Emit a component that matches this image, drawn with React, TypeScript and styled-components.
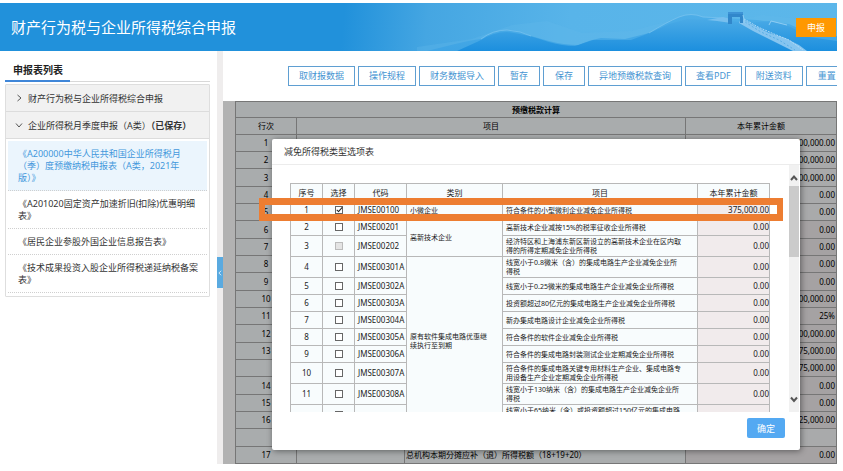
import React from "react";
import styled, { createGlobalStyle, css } from "styled-components";

const GlobalStyle = createGlobalStyle`
  *, *::before, *::after { box-sizing: border-box; }
  body {
    margin: 0;
    background: #fff;
    color: #333;
    font-family: "Noto Sans", "Noto Sans CJK SC", sans-serif;
    font-size: 9px;
  }
  button { font-family: inherit; cursor: pointer; }
`;

const Page = styled.div`
  display: flex;
  flex-direction: column;
  min-height: 100vh;
  padding: 3px 6px 7px 0;
`;

const Header = styled.header`
  position: relative;
  display: flex;
  align-items: center;
  justify-content: space-between;
  height: 48px;
  padding: 0 1px 0 11px;
  background: linear-gradient(95deg, #2191db 0, #2191db 41%, #45a6e2 51%, #58b4e9 68%, #5cb7ea 100%);
`;

const Scenery = styled.svg`
  position: absolute;
  right: 0;
  bottom: 0;
  width: 420px;
  height: 48px;
`;

const PageTitle = styled.h1`
  position: relative;
  margin: 0;
  color: #fff;
  font-size: 15px;
  font-weight: 400;
  line-height: 20px;
`;

const SubmitButton = styled.button`
  position: relative;
  width: 40px;
  height: 19px;
  padding: 0;
  border: 0;
  background: #ff9800;
  color: #fff;
  font-size: 9px;
`;

const Body = styled.div`
  display: flex;
  flex: 1;
`;

const Sidebar = styled.aside`
  width: 217px;
  flex: none;
  padding: 9px 7px 0 5px;
`;

const SidebarTitle = styled.h2`
  margin: 0 0 2px;
  border-bottom: 1px solid #d8d8d8;
  font-size: 10px;
  line-height: 21px;
  color: #222;

  span {
    display: inline-block;
    width: 65px;
    height: 22px;
    margin-bottom: -1px;
    padding-left: 8px;
    border-bottom: 2px solid #3f86d8;
    vertical-align: top;
  }
`;

const Tree = styled.nav`
  border: 1px solid #dedede;
  border-radius: 1px;
`;

const Group = styled.button`
  display: flex;
  align-items: center;
  gap: 5px;
  width: 100%;
  height: 27px;
  padding: 0 0 0 9px;
  border: 0;
  border-bottom: 1px solid #dcdcdc;
  background: #f1f1f1;
  color: #333;
  font-size: 9px;
  white-space: nowrap;

  svg { width: 8px; height: 8px; flex: none; }
`;

const FormList = styled.ul`
  margin: 0;
  padding: 2px 2px 3px;
  list-style: none;
`;

const FormLink = styled.a<{ $active?: boolean }>`
  display: block;
  padding: 7px 0 6px 10px;
  border-bottom: 1px dotted #cfcfcf;
  background: ${(p) => (p.$active ? "#ebf5fd" : "transparent")};
  color: ${(p) => (p.$active ? "#4398dc" : "#333")};
  line-height: 12px;
  text-decoration: none;
  white-space: pre;
`;

const Splitter = styled.div`
  width: 6px;
  flex: none;
  padding-top: 206px;
  background: #efeded;
`;

const CollapseButton = styled.button`
  display: flex;
  align-items: center;
  justify-content: center;
  width: 6px;
  height: 31px;
  padding: 0;
  border: 0;
  background: #5aaae0;

  svg { width: 6px; height: 8px; flex: none; }
`;

const Main = styled.main`
  display: flex;
  flex: 1;
  flex-direction: column;
  min-width: 0;
`;

const Toolbar = styled.div`
  display: flex;
  gap: 3px;
  height: 50px;
  padding: 15px 0 0 65px;
  overflow: hidden;
`;

const ToolButton = styled.button`
  flex: none;
  min-width: 42px;
  height: 20px;
  padding: 0 10px;
  border: 1px solid #5f9fd2;
  background: #fff;
  color: #4594d2;
  font-size: 9px;
  line-height: 16px;
  white-space: nowrap;
`;

const Workspace = styled.section`
  position: relative;
  flex: 1;
  padding-left: 12px;
`;

const Ledger = styled.table`
  width: 100%;
  table-layout: fixed;
  border-spacing: 0;
  border-top: 1px solid #aaa;
  border-left: 1px solid #aaa;
  color: #000;
  font-size: 8px;
  line-height: 12px;

  tr { height: 17px; }
  thead tr:first-child { height: 16px; }
  tbody tr:nth-child(3n) { height: 18px; }
  th, td {
    padding: 0 1px;
    border-right: 1px solid #aaa;
    border-bottom: 1px solid #aaa;
    background: #f3f6f8;
    font-weight: 400;
    white-space: nowrap;
  }
  thead tr:first-child th { font-weight: 700; }
`;

const LedgerNo = styled.td`
  text-align: center;
`;

const LedgerAmount = styled.td<{ $open?: boolean }>`
  && { background: ${(p) => (p.$open ? "#f3f4f5" : "#ede9ea")}; }
  text-align: right;
`;

const Backdrop = styled.div`
  position: absolute;
  inset: 0;
  display: flex;
  padding: 38px 37px 14px 49px;
  background: rgba(0, 0, 0, 0.3);
`;

const Dialog = styled.div`
  position: relative;
  display: flex;
  flex: 1;
  flex-direction: column;
  min-width: 0;
  border-radius: 2px;
  background: #fff;
  box-shadow: 1px 1px 6px rgba(0, 0, 0, 0.45);
`;

const DialogTitle = styled.h2`
  margin: 0;
  padding-left: 12px;
  border-bottom: 1px solid #ececec;
  font-size: 9px;
  font-weight: 400;
  line-height: 25px;
`;

const DialogBody = styled.div`
  display: flex;
  flex: 1 1 0;
  gap: 19px;
  min-height: 0;
  padding: 0 1px 0 18px;
`;

const TableClip = styled.div`
  flex: 1;
  padding-top: 18px;
  overflow: hidden;
`;

const ScrollTrack = styled.div`
  display: flex;
  flex-direction: column;
  align-items: center;
  width: 10px;
  padding: 9px 0;
  background: #f1f1f1;

  svg { width: 8px; height: 8px; flex: none; }
`;

const ScrollThumb = styled.div`
  width: 100%;
  height: 71px;
  margin: 4px 0 auto;
  background: #cbcbcb;
`;

const Options = styled.table`
  width: 100%;
  table-layout: fixed;
  border-spacing: 0;
  border-top: 1px solid #b8b8b8;
  border-left: 1px solid #b8b8b8;
  color: #222;
  font-size: 8px;
  line-height: 10px;

  th, td {
    padding: 0 3px;
    border-right: 1px solid #b8b8b8;
    border-bottom: 1px solid #b8b8b8;
    background: #f8fcfd;
    font-weight: 400;
    white-space: nowrap;
  }
  thead tr { height: 18px; }
`;

const OptionRow = styled.tr<{ $tall?: boolean }>`
  height: ${(p) => (p.$tall ? 21 : 17)}px;
`;

const OptionCell = styled.td<{ $kind?: "center" | "text" | "amount" }>`
  ${(p) => p.$kind === "center" && css`text-align: center;`}
  ${(p) =>
    p.$kind === "text" &&
    css`
      && { white-space: pre; }
      font-size: 7px;
      line-height: 9px;
    `}
  ${(p) =>
    p.$kind === "amount" &&
    css`
      && { background: #f1ebec; padding-right: 0; }
      text-align: right;
    `}
`;

const Tick = styled.input`
  display: block;
  position: relative;
  width: 8px;
  height: 8px;
  margin: 0 auto;
  appearance: none;
  border: 1px solid #666;
  background: #fff;

  &:disabled { border-color: #bbb; background: #e4e4e4; }
  &:checked::before {
    content: "";
    position: absolute;
    left: 2px;
    top: -1px;
    width: 3px;
    height: 6px;
    border: solid #222;
    border-width: 0 1px 1px 0;
    transform: rotate(42deg);
  }
`;

const DialogFooter = styled.div`
  display: flex;
  justify-content: flex-end;
  height: 38px;
  padding: 6px 15px 0 0;
`;

const ConfirmButton = styled.button`
  width: 38px;
  height: 20px;
  padding: 0;
  border: 0;
  border-radius: 2px;
  background: #54a9f2;
  color: #fff;
  font-size: 9px;
`;

const Highlight = styled.div`
  position: absolute;
  top: 59px;
  left: -13px;
  right: 17px;
  height: 23px;
  border: solid #ed7d31;
  border-width: 7px 6px;
  pointer-events: none;
`;

type Direction = "up" | "down" | "left" | "right";
const chevrons: Record<Direction, string> = {
  up: "M1 6 L4 2.5 L7 6",
  down: "M1 2.5 L4 6 L7 2.5",
  left: "M5.5 1 L2.5 4 L5.5 7",
  right: "M2.5 1 L6 4 L2.5 7",
};

function Chevron({ to, color = "#555", weight = 1 }: { to: Direction; color?: string; weight?: number }) {
  return (
    <svg viewBox="0 0 8 8" fill="none" stroke={color} strokeWidth={weight} aria-hidden="true">
      <path d={chevrons[to]} />
    </svg>
  );
}

function GreatWall() {
  return (
    <Scenery viewBox="0 0 420 48" preserveAspectRatio="none" aria-hidden="true">
      <defs>
        <linearGradient id="far" x1="0" y1="0" x2="0" y2="1">
          <stop offset="0" stopColor="#4daee8" />
          <stop offset="1" stopColor="#3fa4e4" />
        </linearGradient>
        <linearGradient id="near" x1="0" y1="0" x2="0" y2="1">
          <stop offset="0" stopColor="#4aaae6" />
          <stop offset="1" stopColor="#1c8fde" />
        </linearGradient>
      </defs>
      <path d="M0 44 L55 36 L95 22 L130 18 L165 30 L215 28 L260 16 L310 20 L345 12 L420 20 V48 H0Z" fill="#62b8ec" opacity="0.3" />
      <path d="M10 48 L34 42 Q54 37 64 36 Q76 27 90 27 Q104 28 114 33 L132 38 Q146 42 162 42 Q172 37 184 35 L208 36 L232 30 Q250 19 262 14 Q274 9 286 14 L306 15 L340 17 L372 21 L392 30 L420 33 V48Z" fill="url(#far)" />
      <path d="M40 48 L62 38 Q76 29 90 29 Q108 31 132 39 Q146 43 158 43 L176 37 L214 37 Q236 29 252 21 L270 16 L306 17 L330 20 L354 18 L374 24 L392 34 L420 38 V48Z" fill="url(#near)" />
      <path d="M64 36 Q76 27 90 27 Q104 28 114 33 M232 30 Q250 19 262 14 Q274 9 286 14 L306 15" fill="none" stroke="#7cc5f0" strokeWidth="1" opacity="0.7" />
      <path d="M324 15 L336 22 L352 30 L368 35 L382 42 L390 48 H376 L364 42 L350 35 L336 28 L322 20Z" fill="#86c5f0" />
      <path d="M290 17 L306 14 L314 16 L314 20 L300 18Z" fill="#77bfee" />
      <path d="M327 16 L341 24 L357 31 L372 37 L386 47" fill="none" stroke="#b0daf6" strokeWidth="1" strokeDasharray="2 1" />
      <path d="M328 19 L344 29 L362 37 L378 47" fill="none" stroke="#5aaee6" strokeWidth="1" strokeDasharray="2 2" />
      <path d="M311 11 H326 V20 H323 V14 H315 V21 H311Z" fill="#3187cb" />
      <path d="M311 11 V9 H326 V11Z" fill="#3d93d6" />
      <path d="M326 12 L328 20 M352 22 L354 18 L370 22" fill="none" stroke="#8fcdf3" strokeWidth="1" />
    </Scenery>
  );
}

const actions = ["取财报数据", "操作规程", "财务数据导入", "暂存", "保存", "异地预缴税款查询", "查看PDF", "附送资料", "重置"];

const forms = [
  "《A200000中华人民共和国企业所得税月\n（季）度预缴纳税申报表（A类，2021年\n版）》",
  "《A201020固定资产加速折旧(扣除)优惠明细\n表》",
  "《居民企业参股外国企业信息报告表》",
  "《技术成果投资入股企业所得税递延纳税备案\n表》",
];

const ledger: { no: string; amount: string; item?: string }[] = [
  { no: "1", amount: "500,000.00" },
  { no: "2", amount: "500,000.00" },
  { no: "3", amount: "500,000.00" },
  { no: "4", amount: "0.00" },
  { no: "5", amount: "0.00" },
  { no: "6", amount: "0.00" },
  { no: "7", amount: "0.00" },
  { no: "8", amount: "0.00" },
  { no: "9", amount: "0.00" },
  { no: "10", amount: "000,000.00" },
  { no: "11", amount: "25%" },
  { no: "12", amount: "500,000.00" },
  { no: "13", amount: "375,000.00" },
  { no: "", amount: "375,000.00" },
  { no: "14", amount: "0.00" },
  { no: "15", amount: "0.00" },
  { no: "16", amount: "125,000.00" },
  { no: "", amount: "" },
  { no: "17", amount: "0.00", item: "总机构本期分摊应补（退）所得税额（18+19+20）" },
];

interface Option {
  code: string;
  item: string;
  amount?: string;
  category?: string;
  span?: number;
  checked?: boolean;
  disabled?: boolean;
}

const options: Option[] = [
  { code: "JMSE00100", category: "小微企业", span: 1, item: "符合条件的小型微利企业减免企业所得税", amount: "375,000.00", checked: true },
  { code: "JMSE00201", category: "高新技术企业", span: 2, item: "高新技术企业减按15%的税率征收企业所得税" },
  { code: "JMSE00202", item: "经济特区和上海浦东新区新设立的高新技术企业在区内取\n得的所得定期减免企业所得税", disabled: true },
  { code: "JMSE00301A", category: "原有软件集成电路优惠继\n续执行至到期", span: 9, item: "线宽小于0.8微米（含）的集成电路生产企业减免企业所\n得税" },
  { code: "JMSE00302A", item: "线宽小于0.25微米的集成电路生产企业减免企业所得税" },
  { code: "JMSE00303A", item: "投资额超过80亿元的集成电路生产企业减免企业所得税" },
  { code: "JMSE00304A", item: "新办集成电路设计企业减免企业所得税" },
  { code: "JMSE00305A", item: "符合条件的软件企业减免企业所得税" },
  { code: "JMSE00306A", item: "符合条件的集成电路封装测试企业定期减免企业所得税" },
  { code: "JMSE00307A", item: "符合条件的集成电路关键专用材料生产企业、集成电路专\n用设备生产企业定期减免企业所得税" },
  { code: "JMSE00308A", item: "线宽小于130纳米（含）的集成电路生产企业减免企业所\n得税" },
  { code: "", item: "线宽小于65纳米（含）或投资额超过150亿元的集成电路\n生产企业减免企业所得税", amount: "" },
];

function OptionsDialog() {
  return (
    <Dialog role="dialog" aria-labelledby="options-title">
      <DialogTitle id="options-title">减免所得税类型选项表</DialogTitle>
      <DialogBody>
        <TableClip>
          <Options>
            <colgroup>
              <col width="32" />
              <col width="32" />
              <col width="52" />
              <col width="96" />
              <col />
              <col width="72" />
            </colgroup>
            <thead>
              <tr>
                {["序号", "选择", "代码", "类别", "项目", "本年累计金额"].map((h) => (
                  <th key={h} scope="col">{h}</th>
                ))}
              </tr>
            </thead>
            <tbody>
              {options.map((o, i) => (
                <OptionRow key={i} $tall={o.item.includes("\n")}>
                  <OptionCell $kind="center">{o.code && i + 1}</OptionCell>
                  <OptionCell>
                    <Tick type="checkbox" aria-label={o.item} defaultChecked={o.checked} disabled={o.disabled} />
                  </OptionCell>
                  <OptionCell>{o.code}</OptionCell>
                  {o.category && <OptionCell $kind="text" rowSpan={o.span}>{o.category}</OptionCell>}
                  <OptionCell $kind="text">{o.item}</OptionCell>
                  <OptionCell $kind="amount">{o.amount ?? "0.00"}</OptionCell>
                </OptionRow>
              ))}
            </tbody>
          </Options>
        </TableClip>
        <ScrollTrack>
          <Chevron to="up" weight={2} />
          <ScrollThumb />
          <Chevron to="down" weight={2} />
        </ScrollTrack>
      </DialogBody>
      <DialogFooter>
        <ConfirmButton type="button">确定</ConfirmButton>
      </DialogFooter>
      <Highlight />
    </Dialog>
  );
}

export default function App() {
  return (
    <Page>
      <GlobalStyle />
      <Header>
        <GreatWall />
        <PageTitle>财产行为税与企业所得税综合申报</PageTitle>
        <SubmitButton type="button">申报</SubmitButton>
      </Header>
      <Body>
        <Sidebar>
          <SidebarTitle><span>申报表列表</span></SidebarTitle>
          <Tree>
            <Group type="button" aria-expanded="false">
              <Chevron to="right" />
              财产行为税与企业所得税综合申报
            </Group>
            <Group type="button" aria-expanded="true">
              <Chevron to="down" />
              <span>企业所得税月季度申报（A类）<b>（已保存）</b></span>
            </Group>
            <FormList>
              {forms.map((f, i) => (
                <li key={f}><FormLink href="#" $active={i === 0}>{f}</FormLink></li>
              ))}
            </FormList>
          </Tree>
        </Sidebar>
        <Splitter>
          <CollapseButton type="button" aria-label="收起">
            <Chevron to="left" color="#fff" />
          </CollapseButton>
        </Splitter>
        <Main>
          <Toolbar>
            {actions.map((a) => <ToolButton key={a} type="button">{a}</ToolButton>)}
          </Toolbar>
          <Workspace>
            <Ledger>
              <colgroup>
                <col width="61" />
                <col width="108" />
                <col />
                <col width="151" />
              </colgroup>
              <thead>
                <tr><th colSpan={4}>预缴税款计算</th></tr>
                <tr>
                  <th scope="col">行次</th>
                  <th scope="col" colSpan={2}>项目</th>
                  <th scope="col">本年累计金额</th>
                </tr>
              </thead>
              <tbody>
                {ledger.map((r, i) => (
                  <tr key={i}>
                    <LedgerNo>{r.no}</LedgerNo>
                    {r.item ? <><td /><td>{r.item}</td></> : <td colSpan={2} />}
                    <LedgerAmount $open={i < 5 || !r.amount}>{r.amount}</LedgerAmount>
                  </tr>
                ))}
              </tbody>
            </Ledger>
            <Backdrop>
              <OptionsDialog />
            </Backdrop>
          </Workspace>
        </Main>
      </Body>
    </Page>
  );
}
